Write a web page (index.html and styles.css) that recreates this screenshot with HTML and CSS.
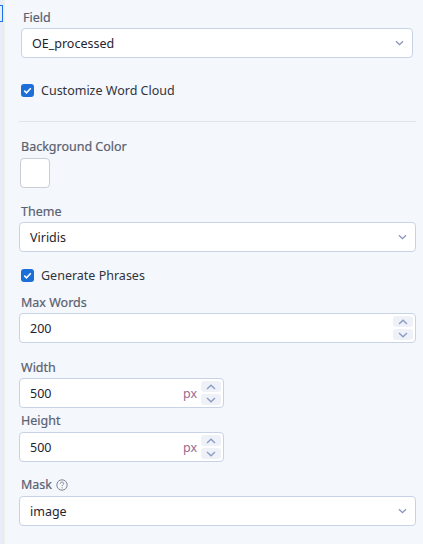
FILE: index.html
```html
<!DOCTYPE html>
<html>
<head>
<meta charset="utf-8">
<link rel="stylesheet" href="styles.css">
</head>
<body>
<div class="page">
  <div class="rail"><div class="rail-focus"></div></div>
  <div class="panel">
    <div class="inset">
      <label class="lbl">Field</label>
      <div class="select">
        <span>OE_processed</span>
        <svg class="chev" width="9" height="6" viewBox="0 0 9 6"><path d="M1 1.2 L4.5 4.6 L8 1.2" fill="none" stroke="#8794bd" stroke-width="1.3"/></svg>
      </div>
      <div class="check-row first-check">
        <span class="cb"><svg width="13" height="13" viewBox="0 0 13 13"><path d="M3.3 6.7 L5.5 8.8 L9.8 4.3" fill="none" stroke="#fff" stroke-width="1.6"/></svg></span>
        <span class="cb-text">Customize Word Cloud</span>
      </div>
    </div>
    <div class="divider"></div>

    <label class="lbl bg-lbl">Background Color</label>
    <div class="swatch"></div>

    <label class="lbl theme-lbl">Theme</label>
    <div class="select">
      <span>Viridis</span>
      <svg class="chev" width="9" height="6" viewBox="0 0 9 6"><path d="M1 1.2 L4.5 4.6 L8 1.2" fill="none" stroke="#8794bd" stroke-width="1.3"/></svg>
    </div>

    <div class="check-row gen-check">
      <span class="cb"><svg width="13" height="13" viewBox="0 0 13 13"><path d="M3.3 6.7 L5.5 8.8 L9.8 4.3" fill="none" stroke="#fff" stroke-width="1.6"/></svg></span>
      <span class="cb-text">Generate Phrases</span>
    </div>

    <label class="lbl max-lbl">Max Words</label>
    <div class="input">
      <span class="val">200</span>
      <div class="spin">
        <div class="spin-btn"><svg width="10" height="6" viewBox="0 0 10 6"><path d="M1 5 L5 1.2 L9 5" fill="none" stroke="#8a9ac4" stroke-width="1.3"/></svg></div>
        <div class="spin-btn"><svg width="10" height="6" viewBox="0 0 10 6"><path d="M1 1 L5 4.8 L9 1" fill="none" stroke="#8a9ac4" stroke-width="1.3"/></svg></div>
      </div>
    </div>

    <label class="lbl width-lbl">Width</label>
    <div class="input small">
      <span class="val">500</span>
      <span class="unit">px</span>
      <div class="spin">
        <div class="spin-btn"><svg width="10" height="6" viewBox="0 0 10 6"><path d="M1 5 L5 1.2 L9 5" fill="none" stroke="#8a9ac4" stroke-width="1.3"/></svg></div>
        <div class="spin-btn"><svg width="10" height="6" viewBox="0 0 10 6"><path d="M1 1 L5 4.8 L9 1" fill="none" stroke="#8a9ac4" stroke-width="1.3"/></svg></div>
      </div>
    </div>

    <label class="lbl height-lbl">Height</label>
    <div class="input small">
      <span class="val">500</span>
      <span class="unit">px</span>
      <div class="spin">
        <div class="spin-btn"><svg width="10" height="6" viewBox="0 0 10 6"><path d="M1 5 L5 1.2 L9 5" fill="none" stroke="#8a9ac4" stroke-width="1.3"/></svg></div>
        <div class="spin-btn"><svg width="10" height="6" viewBox="0 0 10 6"><path d="M1 1 L5 4.8 L9 1" fill="none" stroke="#8a9ac4" stroke-width="1.3"/></svg></div>
      </div>
    </div>

    <label class="lbl mask-lbl">Mask
      <svg class="help" width="12" height="12" viewBox="0 0 12 12"><circle cx="6" cy="6" r="5.2" fill="none" stroke="#7f8592" stroke-width="1"/><path d="M4.3 4.7 C4.3 3.6 5 3.1 6 3.1 C7 3.1 7.7 3.7 7.7 4.6 C7.7 5.7 6.1 5.8 6.1 7.1" fill="none" stroke="#7f8592" stroke-width="1"/><circle cx="6.1" cy="8.8" r="0.65" fill="#7f8592"/></svg>
    </label>
    <div class="select">
      <span>image</span>
      <svg class="chev" width="9" height="6" viewBox="0 0 9 6"><path d="M1 1.2 L4.5 4.6 L8 1.2" fill="none" stroke="#8794bd" stroke-width="1.3"/></svg>
    </div>
  </div>
</div>
</body>
</html>
```

FILE: styles.css
```css
html, body {
  margin: 0;
  padding: 0;
  background: #f4f7fc;
}
body {
  font-family: "Noto Sans", "Open Sans", sans-serif;
  font-size: 12.5px;
  color: #1f2430;
}
.page {
  display: flex;
  min-height: 544px;
}
.rail {
  width: 4px;
  flex: none;
  background: #e8ecf6;
  border-right: 1px solid #eef0ea;
}
.rail-focus {
  margin-top: 5px;
  height: 15px;
  border: 1.5px solid #1a73e8;
  border-left: none;
  width: 2px;
}
.panel {
  flex: 1;
  display: flex;
  flex-direction: column;
  padding: 9px 7px 0 14px;
}
.inset {
  display: flex;
  flex-direction: column;
  padding: 0 3px 0 2px;
}
.lbl {
  display: flex;
  align-items: center;
  gap: 4px;
  height: 17px;
  line-height: 17px;
  font-size: 12.5px;
  font-weight: 400;
  color: #5a6170;
  margin-bottom: 2px;
  padding-left: 2px;
  -webkit-text-stroke: 0.2px #5a6170;
}
.select, .input {
  height: 28px;
  border: 1px solid #c9d3e6;
  border-radius: 4px;
  background: #fff;
  display: flex;
  align-items: center;
  padding: 0 0 0 10px;
  box-sizing: content-box;
}
.select span, .input .val {
  flex: 1;
  font-size: 12.5px;
  color: #1f2430;
}
.chev {
  margin-right: 8px;
}
.check-row {
  display: flex;
  align-items: center;
  gap: 7px;
  height: 13px;
}
.first-check {
  margin-top: 26px;
}
.cb {
  width: 13px;
  height: 13px;
  border-radius: 3px;
  background: #1b6fd6;
  display: flex;
  align-items: center;
  justify-content: center;
  flex: none;
}
.cb-text {
  font-size: 12.5px;
  color: #30343c;
}
.divider {
  height: 1px;
  background: #dfe3ea;
  margin-top: 24px;
}
.bg-lbl {
  margin-top: 16px;
}
.swatch {
  width: 28px;
  height: 28px;
  border: 1px solid #c9cdd6;
  border-radius: 4px;
  background: #fff;
  margin-left: 1px;
  margin-top: 1px;
}
.theme-lbl {
  margin-top: 15px;
}
.gen-check {
  margin-top: 17px;
  margin-left: 2px;
}
.max-lbl {
  margin-top: 12px;
}
.spin {
  display: flex;
  flex-direction: column;
  gap: 2px;
  margin-right: 2px;
  width: 20px;
}
.spin-btn {
  height: 11px;
  background: #eef1f8;
  border-radius: 3px;
  display: flex;
  align-items: center;
  justify-content: center;
}
.width-lbl {
  margin-top: 16px;
}
.input.small {
  width: 193px;
}
.unit {
  color: #9a6a8e;
  font-size: 12.5px;
  margin-right: 4px;
}
.height-lbl {
  margin-top: 4px;
  margin-bottom: 3px;
}
.mask-lbl {
  margin-top: 14px;
  margin-bottom: 3px;
}
.help {
  margin-top: 0;
}
```
